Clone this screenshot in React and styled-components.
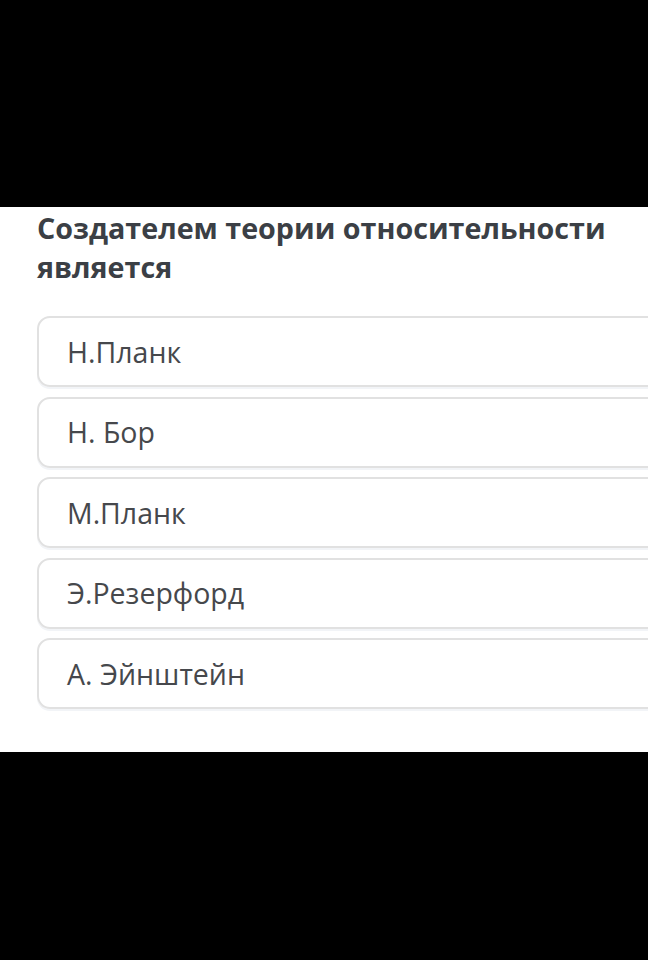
import React from "react";
import styled, { createGlobalStyle } from "styled-components";

const GlobalStyle = createGlobalStyle`
  html, body {
    margin: 0;
    padding: 0;
    background: #000;
  }
  body {
    font-family: "Open Sans", "Noto Sans", sans-serif;
  }
`;

const Screen = styled.div`
  width: 648px;
  height: 960px;
  background: #000;
  padding-top: 207px;
  box-sizing: border-box;
  overflow: hidden;
`;

const Panel = styled.section`
  background: #fff;
  height: 545px;
  box-sizing: border-box;
  padding: 1px 0 0 37px;
  overflow: hidden;
`;

const Question = styled.h2`
  margin: 0;
  font-size: 28.7px;
  line-height: 39px;
  font-weight: 700;
  color: #3b3f45;
  letter-spacing: 0;
`;

const Options = styled.ul`
  list-style: none;
  margin: 30px -40px 0 0;
  padding: 0;
  display: flex;
  flex-direction: column;
  gap: 9.5px;
`;

const Option = styled.li`
  height: 71px;
  box-sizing: border-box;
  border: 2px solid #e1e1e1;
  border-radius: 13px;
  box-shadow: 0 2px 0 #f2f4f7;
  display: flex;
  align-items: center;
  padding-left: 28px;
  font-size: 28.5px;
  color: #46484c;
`;

const answers = ["Н.Планк", "Н. Бор", "М.Планк", "Э.Резерфорд", "А. Эйнштейн"];

export default function App() {
  return (
    <Screen>
      <GlobalStyle />
      <Panel>
        <Question>
          Создателем теории относительности
          <br />
          является
        </Question>
        <Options>
          {answers.map((a) => (
            <Option key={a}>{a}</Option>
          ))}
        </Options>
      </Panel>
    </Screen>
  );
}
